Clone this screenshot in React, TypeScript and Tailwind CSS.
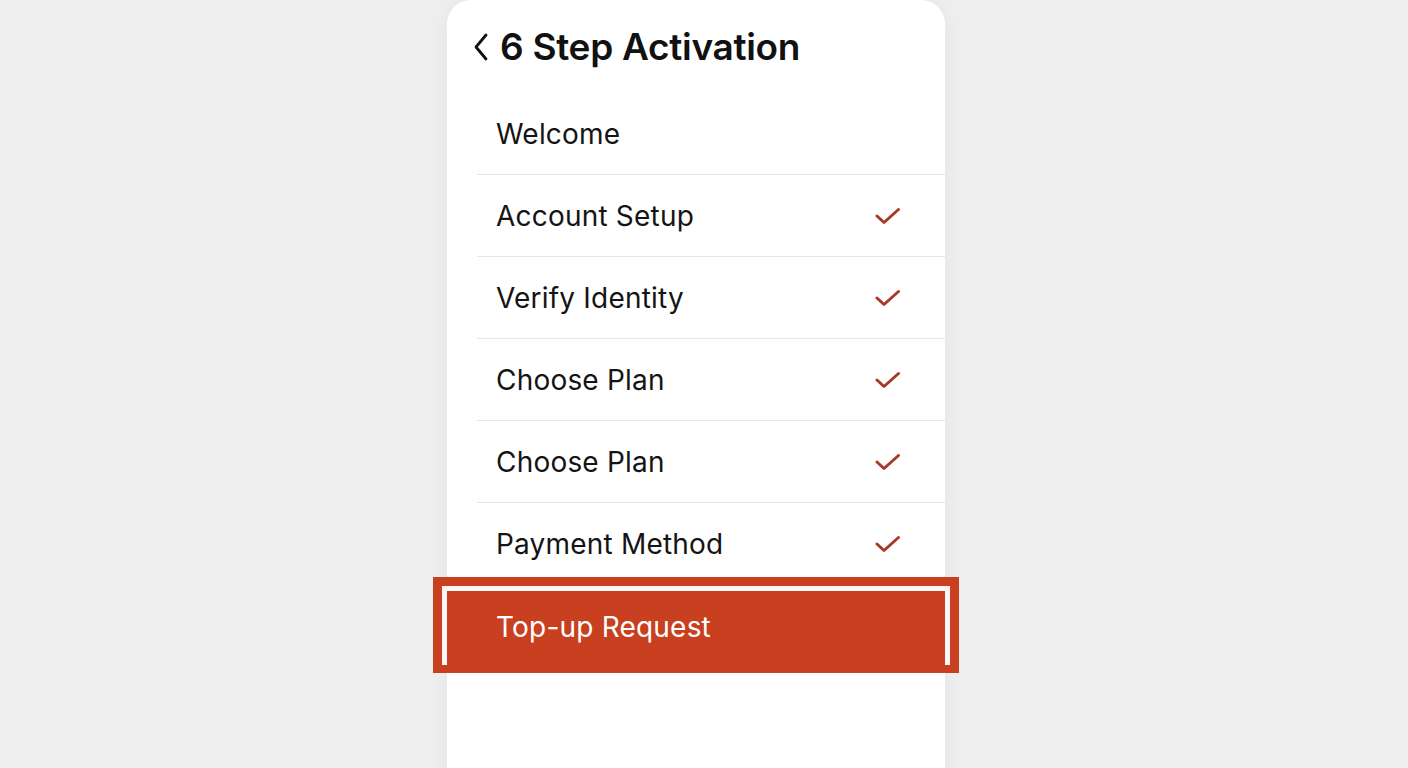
import React from "react";

interface Step {
  label: string;
  done: boolean;
}

const steps: Step[] = [
  { label: "Welcome", done: false },
  { label: "Account Setup", done: true },
  { label: "Verify Identity", done: true },
  { label: "Choose Plan", done: true },
  { label: "Choose Plan", done: true },
  { label: "Payment Method", done: true },
];

const Check = () => (
  <svg width="26" height="20" viewBox="0 0 26 20" fill="none">
    <path
      d="M2 10 L9 16.5 L23.5 3.5"
      stroke="#a83a28"
      strokeWidth="3"
      strokeLinecap="round"
      strokeLinejoin="round"
    />
  </svg>
);

export default function App() {
  return (
    <div className="h-[768px] w-full overflow-hidden bg-[#efefef] [font-family:Inter,'Liberation_Sans',sans-serif]">
      <div className="relative ml-[447px] h-[800px] w-[498px] rounded-t-[24px] bg-white shadow-[0_0_24px_rgba(0,0,0,0.05)]">
        <header className="flex items-center h-[93px] pl-[26px]">
          <svg width="16" height="28" viewBox="0 0 16 28" fill="none" className="mr-[11px]">
            <path d="M13 2 L3 14 L13 26" stroke="#111" strokeWidth="2.8" strokeLinecap="round" strokeLinejoin="round" />
          </svg>
          <h1 className="text-[37px] font-semibold text-[#111] tracking-[-0.3px]">6 Step Activation</h1>
        </header>

        <ul className="flex flex-col">
          {steps.map((step, i) => (
            <li key={i} className={`flex items-center justify-between h-[82px] ml-[30px] pl-[19px] pr-[44px] ${i < steps.length - 1 ? "border-b border-[#e6e6e6]" : ""}`}>
              <span className="text-[28px] text-[#141414] tracking-[0.2px]">{step.label}</span>
              {step.done && <Check />}
            </li>
          ))}
        </ul>

        <div className="relative -mt-[8px] -ml-[14px] -mr-[14px] h-[96px] bg-[#c8401f] pt-[9px] px-[9px]">
          <div className="flex h-[79px] items-center border-[5px] border-b-0 border-white/95 pl-[49px] pb-[2px]">
            <span className="text-[28px] text-white tracking-[0.2px]">Top-up Request</span>
          </div>
        </div>
      </div>
    </div>
  );
}
